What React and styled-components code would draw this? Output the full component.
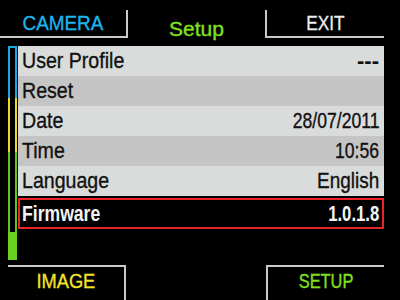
import React from 'react';
import styled, { createGlobalStyle } from 'styled-components';

const GlobalStyle = createGlobalStyle`
  html, body {
    margin: 0;
    padding: 0;
    background: #000;
  }
`;

const LINE = '#c9c9c9';

const Screen = styled.div`
  width: 400px;
  height: 300px;
  background: #000;
  display: flex;
  flex-direction: column;
  overflow: hidden;
  font-family: 'Liberation Sans', Arial, sans-serif;
`;

// the camera font is a tall narrow sans, so squeeze Liberation Sans sideways
const Txt = styled.span`
  display: inline-block;
  white-space: nowrap;
  transform: scaleX(${(p) => p.$sx || 1});
  transform-origin: ${(p) => p.$origin || 'center'} center;
  font-weight: ${(p) => (p.$bold ? 700 : 400)};
  -webkit-text-stroke: ${(p) => (p.$bold ? '0' : '0.35px')} currentColor;
`;

const Header = styled.div`
  height: 46px;
  display: grid;
  grid-template-columns: 128px 137px 119px;
  align-items: start;
`;

const TopTab = styled.div`
  margin-top: 10px;
  height: 26px;
  display: flex;
  align-items: center;
  justify-content: center;
  border-bottom: 2px solid ${LINE};
  ${(p) => (p.$side === 'left' ? `border-right: 2px solid ${LINE};` : `border-left: 2px solid ${LINE};`)}
  color: ${(p) => p.$color};
  font-size: 21px;
`;

const Title = styled.div`
  height: 46px;
  display: flex;
  align-items: center;
  justify-content: center;
  padding-top: 11px;
  box-sizing: border-box;
  color: #80e020;
  font-size: 21px;
`;

const Body = styled.div`
  height: 214px;
  margin-left: 8px;
  display: flex;
  gap: 1px;
`;

const Scroll = styled.div`
  width: 9px;
  display: flex;
  flex-direction: column;
`;

const Segment = styled.div`
  box-sizing: border-box;
  height: ${(p) => (p.$h ? `${p.$h}px` : 'auto')};
  flex: ${(p) => (p.$h ? 'none' : 1)};
  border-left: 2px solid ${(p) => p.$color};
  border-right: 2px solid ${(p) => p.$color};
  border-top: ${(p) => (p.$top ? `2px solid ${p.$color}` : 'none')};
  display: flex;
  flex-direction: column;
  justify-content: flex-end;
`;

const Thumb = styled.div`
  height: 28px;
  margin: 0 -2px;
  background: #66d11f;
`;

const List = styled.div`
  width: 366px;
  display: flex;
  flex-direction: column;
`;

const Row = styled.div`
  height: 30px;
  box-sizing: border-box;
  display: flex;
  align-items: center;
  justify-content: space-between;
  padding: 0 5px 0 4px;
  background: ${(p) => (p.$shade ? '#c5c5c5' : '#dadcdb')};
  color: #111;
  font-size: 22px;
`;

const Selected = styled(Row)`
  height: 31px;
  margin-top: 2px;
  background: #000;
  border: 2px solid #e8242c;
  padding: 0 3px 0 2px;
  color: #f4f4f4;
`;

const Footer = styled.div`
  flex: 1;
  display: flex;
  justify-content: space-between;
  align-items: flex-end;
  padding: 0 16px 0 8px;
`;

const BottomTab = styled.div`
  width: 118px;
  height: 35px;
  display: flex;
  align-items: center;
  justify-content: center;
  padding-bottom: 6px;
  box-sizing: border-box;
  border-top: 2px solid ${LINE};
  ${(p) => (p.$side === 'left' ? `border-right: 2px solid ${LINE};` : `border-left: 2px solid ${LINE};`)}
  color: ${(p) => p.$color};
  font-size: 21px;
`;

const rows = [
  { label: 'User Profile', value: '---', sx: 1, bold: true },
  { label: 'Reset', value: '', sx: 0.89 },
  { label: 'Date', value: '28/07/2011', sx: 0.8 },
  { label: 'Time', value: '10:56', sx: 0.8 },
  { label: 'Language', value: 'English', sx: 0.86 },
];

export default function App() {
  return (
    <>
      <GlobalStyle />
      <Screen>
        <Header>
          <TopTab $side="left" $color="#1ab6ee">
            <Txt $sx={0.9}>CAMERA</Txt>
          </TopTab>
          <Title>
            <Txt>Setup</Txt>
          </Title>
          <TopTab $side="right" $color="#ececec">
            <Txt $sx={0.82}>EXIT</Txt>
          </TopTab>
        </Header>
        <Body>
          <Scroll>
            <Segment $top $h={52} $color="#1aa8e4" />
            <Segment $h={54} $color="#f2d62a" />
            <Segment $color="#5cc81e">
              <Thumb />
            </Segment>
          </Scroll>
          <List>
            {rows.map((r, i) => (
              <Row key={r.label} $shade={i % 2 === 1}>
                <Txt $sx={0.89} $origin="left">{r.label}</Txt>
                <Txt $sx={r.sx} $bold={r.bold} $origin="right">{r.value}</Txt>
              </Row>
            ))}
            <Selected>
              <Txt $bold $sx={0.8} $origin="left">Firmware</Txt>
              <Txt $bold $sx={0.76} $origin="right">1.0.1.8</Txt>
            </Selected>
          </List>
        </Body>
        <Footer>
          <BottomTab $side="left" $color="#f4e428">
            <Txt $sx={0.87}>IMAGE</Txt>
          </BottomTab>
          <BottomTab $side="right" $color="#80e020">
            <Txt $sx={0.78}>SETUP</Txt>
          </BottomTab>
        </Footer>
      </Screen>
    </>
  );
}
